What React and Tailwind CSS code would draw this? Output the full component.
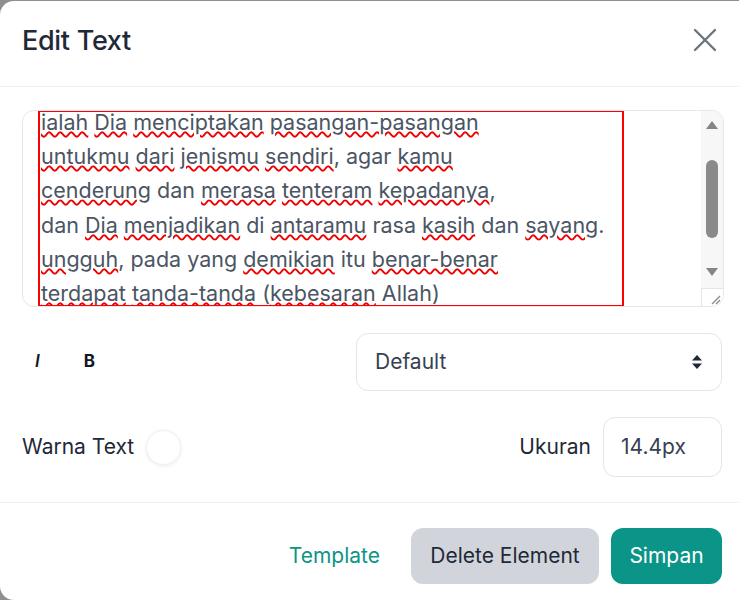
import React from "react";

const W = ({ children }) => (
  <span className="underline decoration-wavy decoration-[#e00] decoration-[1.5px] underline-offset-[1px]">{children}</span>
);

export default function App() {
  return (
    <div className="w-[739px] h-[600px] bg-[#8f8f8f] pt-[1px] overflow-hidden" style={{ fontFamily: "Inter, 'Noto Sans', sans-serif" }}>
      <div className="h-[599px] bg-white rounded-tl-[14px] rounded-bl-[14px] flex flex-col">
        {/* Header */}
        <div className="h-[86px] border-b border-[#f0f1f3] flex items-start justify-between pl-[22px] pr-[22px] pt-[21px]">
          <h1 className="text-[27px] leading-[38px] text-[#1f2937] font-medium tracking-[-0.3px]">Edit Text</h1>
          <svg width="24" height="24" viewBox="0 0 24 24" className="mt-[6px]" fill="none" stroke="#6b7280" strokeWidth="2.3" strokeLinecap="round">
            <line x1="2" y1="2" x2="22" y2="22" />
            <line x1="22" y1="2" x2="2" y2="22" />
          </svg>
        </div>

        {/* Body */}
        <div className="flex-1 pl-[22px] pr-[17px] pt-[23px] flex flex-col">
          {/* Textarea */}
          <div className="h-[197px] w-[702px] border border-[#e5e7eb] rounded-[12px] flex overflow-hidden">
            <div className="flex-1 pl-[15px] overflow-hidden">
              <div className="w-[586px] h-[197px] border-2 border-[#ff0000] pl-[1px] text-[21.5px] leading-[34.2px] text-[#4b5563] -mt-[1px] overflow-hidden whitespace-nowrap">
                <div className="-mt-[7px]"><W>ialah</W> <W>Dia</W> <W>menciptakan</W> <W>pasangan-pasangan</W></div>
                <div><W>untukmu</W> <W>dari</W> <W>jenismu</W> <W>sendiri</W>, agar <W>kamu</W></div>
                <div><W>cenderung</W> dan <W>merasa</W> <W>tenteram</W> <W>kepadanya</W>,</div>
                <div>dan <W>Dia</W> <W>menjadikan</W> di <W>antaramu</W> rasa <W>kasih</W> dan <W>sayang</W>.</div>
                <div><W>ungguh</W>, pada yang <W>demikian</W> itu <W>benar-benar</W></div>
                <div><W>terdapat</W> <W>tanda-tanda</W> (<W>kebesaran</W> Allah)</div>
              </div>
            </div>
            {/* scrollbar */}
            <div className="w-[22px] bg-[#f7f7f7] flex flex-col items-center">
              <svg width="14" height="10" viewBox="0 0 14 10" className="mt-[9px]"><polygon points="7,1 13,9 1,9" fill="#858585" /></svg>
              <div className="w-[12px] h-[78px] rounded-full bg-[#8a8a8a] mt-[30px]" />
              <div className="flex-1" />
              <svg width="14" height="10" viewBox="0 0 14 10" className="mb-[11px]"><polygon points="1,1 13,1 7,9" fill="#858585" /></svg>
              <div className="w-[22px] h-[18px] bg-white border-t border-l border-[#e5e5e5] relative">
                <svg width="12" height="12" viewBox="0 0 12 12" className="absolute right-[2px] bottom-[1px]" stroke="#8a8a8a" strokeWidth="1.2">
                  <line x1="11" y1="3" x2="3" y2="11" />
                  <line x1="11" y1="7" x2="7" y2="11" />
                </svg>
              </div>
            </div>
          </div>

          {/* Row 1 */}
          <div className="mt-[26px] flex items-center justify-between">
            <div className="flex items-center pl-[13px]">
              <span className="text-[17px] italic font-semibold text-[#111827]">I</span>
              <span className="ml-[44px] text-[17px] font-bold text-[#111827]">B</span>
            </div>
            <div className="w-[366px] h-[58px] border border-[#e2e5ea] rounded-[12px] flex items-center justify-between pl-[18px] pr-[18px]">
              <span className="text-[21px] text-[#374151]">Default</span>
              <svg width="12" height="16" viewBox="0 0 12 16"><polygon points="6,1 11,6.5 1,6.5" fill="#1f2937" /><polygon points="1,9.5 11,9.5 6,15" fill="#1f2937" /></svg>
            </div>
          </div>

          {/* Row 2 */}
          <div className="mt-[26px] flex items-center justify-between">
            <div className="flex items-center">
              <span className="text-[21px] text-[#1f2937]">Warna Text</span>
              <div className="ml-[12px] w-[35px] h-[35px] rounded-full bg-white border border-[#f1f1f1] shadow-[0_1px_4px_rgba(0,0,0,0.08)]" />
            </div>
            <div className="flex items-center">
              <span className="text-[21px] text-[#1f2937]">Ukuran</span>
              <div className="ml-[12px] w-[119px] h-[60px] border border-[#e2e5ea] rounded-[12px] flex items-center pl-[17px]">
                <span className="text-[21px] text-[#374151]">14.4px</span>
              </div>
            </div>
          </div>
        </div>

        {/* Footer */}
        <div className="h-[98px] border-t border-[#f0f1f3] flex items-center justify-end pr-[17px] pt-[8px]">
          <span className="text-[21px] text-[#0d9488] mr-[31px]">Template</span>
          <div className="w-[188px] h-[56px] rounded-[12px] bg-[#d1d5db] flex items-center justify-center text-[21px] text-[#1f2937]">Delete Element</div>
          <div className="ml-[12px] w-[111px] h-[56px] rounded-[12px] bg-[#0b9488] flex items-center justify-center text-[21px] text-white">Simpan</div>
        </div>
      </div>
    </div>
  );
}
